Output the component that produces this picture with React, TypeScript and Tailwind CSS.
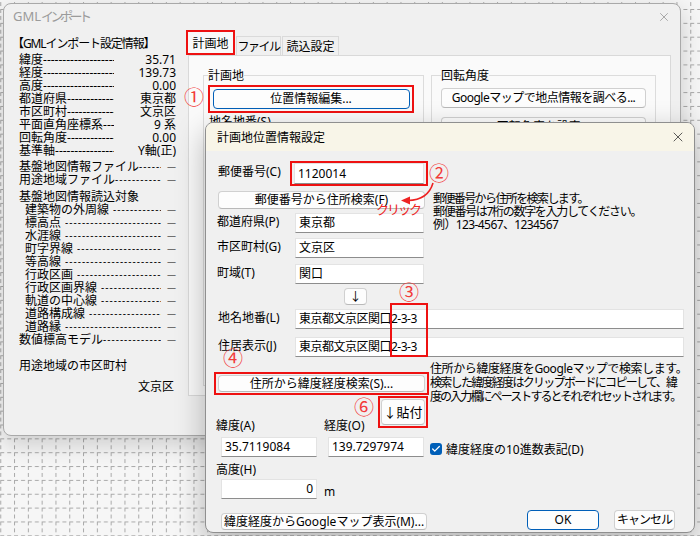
import { X, Check } from "lucide-react";
import type { ReactNode } from "react";

const DASH = "-".repeat(90);

const info: [string, string][] = [
  ["緯度", "35.71"],
  ["経度", "139.73"],
  ["高度", "0.00"],
  ["都道府県", "東京都"],
  ["市区町村", "文京区"],
  ["平面直角座標系", "9 系"],
  ["回転角度", "0.00"],
  ["基準軸", "Y軸(正)"],
];

const layers = [
  "建築物の外周線",
  "標高点",
  "水涯線",
  "町字界線",
  "等高線",
  "行政区画",
  "行政区画界線",
  "軌道の中心線",
  "道路構成線",
  "道路縁",
];

function Button({
  children,
  className = "",
  primary = false,
}: {
  children: ReactNode;
  className?: string;
  primary?: boolean;
}) {
  return (
    <div
      className={`flex items-center justify-center whitespace-nowrap rounded-[4px] border bg-[#fdfdfd] text-[12px] leading-none ${
        primary ? "border-[#005fb8]" : "border-[#d0d0d0] border-b-[#b9b9b9]"
      } ${className}`}
    >
      {children}
    </div>
  );
}

function Field({
  children,
  className = "",
  right = false,
}: {
  children?: ReactNode;
  className?: string;
  right?: boolean;
}) {
  return (
    <div
      className={`flex items-center whitespace-nowrap border border-[#e3e3e3] border-b-[#8d8d8d] bg-white px-[3px] text-[12px] leading-none ${
        right ? "justify-end" : ""
      } ${className}`}
    >
      {children}
    </div>
  );
}

function Mark({ n, className }: { n: string; className: string }) {
  return (
    <span
      className={`absolute flex h-[20px] w-[20px] items-center justify-center text-[20px] leading-none text-[#f23a3a] ${className}`}
    >
      {n}
    </span>
  );
}

function LabeledField({ label, value, className = "" }: { label: string; value: string; className?: string }) {
  return (
    <div className={`flex items-center ${className}`}>
      <span className="-ml-[1px] mb-[3px] w-[78px]">{label}</span>
      <Field className="h-[20px] w-[129px]">{value}</Field>
    </div>
  );
}

function InfoRow({ label, value }: { label: string; value: string }) {
  return (
    <div className="flex h-[13px] w-[172px] items-center pl-[15px]">
      <span className="whitespace-nowrap">{label}</span>
      <span className="flex-1 overflow-hidden whitespace-nowrap">{DASH}</span>
      <span className="w-[62px] whitespace-nowrap text-right">{value}</span>
    </div>
  );
}

function FileRow({ label, indent = false, className = "" }: { label: string; indent?: boolean; className?: string }) {
  return (
    <div className={`flex h-[13px] w-[172px] items-center ${indent ? "pl-[21px]" : "pl-[15px]"} ${className}`}>
      <span className="whitespace-nowrap">{label}</span>
      <span
        className={`flex-1 overflow-hidden whitespace-nowrap text-[10px] tracking-[1px] ${indent ? "ml-[4px]" : ""}`}
      >
        {DASH}
      </span>
      <span className="w-[15px] text-right text-[9px]">—</span>
    </div>
  );
}

function MainWindow() {
  return (
    <div className="absolute left-[3px] top-[3px] flex h-[433px] w-[678px] flex-col overflow-hidden rounded-[8px] border border-[#a9a9a9] bg-[#f0f0f0] shadow-[0_8px_24px_rgba(0,0,0,0.18)]">
      <div className="flex h-[26px] items-center justify-between pl-[9px] pr-[9px]">
        <span className="whitespace-nowrap text-[13px] text-[#9b9b9b]">
          GML<span className="tracking-[-3.5px]">インポート</span>
        </span>
        <X className="h-[14px] w-[14px] text-[#8a8a8a]" strokeWidth={1.2} />
      </div>
      <div className="flex flex-1">
        {/* 設定情報 */}
        <div className="w-[182px] pt-[7px] text-[12px] leading-[13px]">
          <div className="h-[13px] whitespace-nowrap pl-[8px] tracking-[-1.1px]">【GMLインポート設定情報】</div>
          <div className="mt-[3px]">
            {info.map(([l, v]) => (
              <InfoRow key={l} label={l} value={v} />
            ))}
          </div>
          <FileRow label="基盤地図情報ファイル" className="mt-[3px]" />
          <FileRow label="用途地域ファイル" />
          <div className="mt-[4px] h-[13px] pl-[15px]">基盤地図情報読込対象</div>
          {layers.map((l) => (
            <FileRow key={l} label={l} indent />
          ))}
          <FileRow label="数値標高モデル" />
          <div className="mt-[13px] h-[13px] pl-[15px]">用途地域の市区町村</div>
          <div className="mt-[8px] h-[13px] w-[172px] pr-[2px] text-right">文京区</div>
        </div>

        {/* タブ */}
        <div className="text-[12px] leading-[13px]">
          <div className="flex h-[25px] items-end">
            <div className="flex h-[25px] w-[49px] items-center justify-center border-2 border-[#ee1111] bg-[#f9f9f9] pt-[2px]">
              計画地
            </div>
            <div className="ml-[1px] flex h-[19px] w-[45px] items-center justify-center whitespace-nowrap border border-b-0 border-[#dadada] bg-[#f0f0f0] tracking-[-1.5px]">
              ファイル
            </div>
            <div className="ml-[1px] flex h-[19px] w-[57px] items-center justify-center whitespace-nowrap border border-b-0 border-[#dadada] bg-[#f0f0f0]">
              読込設定
            </div>
          </div>
          <div className="ml-[2px] flex h-[341px] w-[483px] gap-[7px] border border-[#d9d9d9] bg-[#fafafa] px-[14px] pt-[13px]">
            <fieldset className="h-[317px] w-[224px] border border-[#dcdcdc] px-[4px]">
              <legend>計画地</legend>
              <div className="relative mt-[3px] w-[206px] border-2 border-[#ee1111] px-[2.5px] py-[2px]">
                <Button primary className="h-[20px] w-[197px]">
                  位置情報編集...
                </Button>
                <Mark n="①" className="left-[-26px] top-[1px]" />
              </div>
              <div className="mt-[2px] pl-[1px]">地名地番(S)</div>
            </fieldset>
            <fieldset className="h-[317px] w-[225px] border border-[#dcdcdc] px-[9px]">
              <legend>回転角度</legend>
              <Button className="mt-[6px] h-[20px] w-[205px] tracking-[-0.5px]">Googleマップで地点情報を調べる...</Button>
              <Button className="mt-[9px] h-[20px] w-[205px]">回転角度を設定...</Button>
            </fieldset>
          </div>
        </div>
      </div>
    </div>
  );
}

function Dialog() {
  return (
    <div className="absolute left-[205px] top-[122px] flex h-[411px] w-[490px] flex-col overflow-hidden rounded-[8px] border border-[#8f8f8f] bg-[#f0f0f0] text-[12px] leading-[13px] shadow-[0_10px_30px_rgba(0,0,0,0.28)]">
      <div className="flex h-[28px] shrink-0 items-center justify-between bg-[#f8f5e8] pl-[11px] pr-[8px]">
        <span>計画地位置情報設定</span>
        <X className="h-[16px] w-[16px] text-[#333]" strokeWidth={1.2} />
      </div>

      <div className="pl-[12px]">
        {/* 郵便番号 */}
        <div className="mt-[10px] flex items-center">
          <span className="mb-[4px] w-[72px]">郵便番号(C)</span>
          <div className="border-2 border-[#ee1111] px-[2px]">
            <Field className="h-[21px] w-[130px]">1120014</Field>
          </div>
        </div>

        <div className="mt-[5px] flex">
          <div className="w-[212px]">
            <Button className="h-[18px] w-[207px]">郵便番号から住所検索(F)</Button>
            <LabeledField label="都道府県(P)" value="東京都" className="mt-[4px]" />
            <LabeledField label="市区町村(G)" value="文京区" className="mt-[5px]" />
            <LabeledField label="町域(T)" value="関口" className="mt-[6px]" />
            <Button className="ml-[126px] mt-[4px] h-[17px] w-[23px]">↓</Button>
          </div>
          <div className="ml-[3px] mt-[1px] whitespace-nowrap">
            <div className="tracking-[-1.6px]">郵便番号から住所を検索します。</div>
            <div className="tracking-[-1.3px]">郵便番号は7桁の数字を入力してください。</div>
            <div className="tracking-[-0.6px]">例）123-4567、1234567</div>
          </div>
        </div>

        <div className="mt-[4px] flex items-center">
          <span className="mb-[3px] w-[77px]">地名地番(L)</span>
          <Field className="h-[20px] w-[389px] tracking-[-0.5px]">東京都文京区関口2-3-3</Field>
        </div>
        <div className="mt-[8px] flex items-center">
          <span className="mb-[3px] w-[77px]">住居表示(J)</span>
          <Field className="h-[20px] w-[389px] tracking-[-0.5px]">東京都文京区関口2-3-3</Field>
        </div>

        {/* 緯度経度検索 */}
        <div className="mt-[5px] flex">
          <div className="w-[212px] pt-[10px]">
            <div className="-ml-[4px] w-[215px] border-2 border-[#ee1111] px-[2px] py-[1px]">
              <Button className="h-[17px] w-[207px]">住所から緯度経度検索(S)...</Button>
            </div>
            <div className="mt-[1px] flex h-[36px]">
              <span className="-ml-[2px] w-[108px] self-end">緯度(A)</span>
              <span className="self-end">経度(O)</span>
              <div className="ml-auto mr-[2px] self-start border-2 border-[#ee1111] p-[1px]">
                <Button className="h-[26px] w-[44px] text-[13px]">↓貼付</Button>
              </div>
            </div>
          </div>
          <div className="whitespace-nowrap leading-[14px]">
            <div className="tracking-[-0.4px]">住所から緯度経度をGoogleマップで検索します。</div>
            <div className="tracking-[-1.7px]">検索した緯度経度はクリップボードにコピーして、緯</div>
            <div className="tracking-[-1.9px]">度の入力欄にペーストするとそれぞれセットされます。</div>
          </div>
        </div>

        <div className="mt-[5px] flex items-center">
          <Field className="ml-[3px] h-[20px] w-[96px]">35.7119084</Field>
          <Field className="ml-[11px] h-[20px] w-[96px]">139.7297974</Field>
          <div className="ml-[6px] mt-[4px] flex h-[12px] w-[12px] items-center justify-center rounded-[3px] bg-[#005fb8]">
            <Check className="h-[10px] w-[10px] text-white" strokeWidth={3} />
          </div>
          <span className="ml-[4px] mt-[4px]">緯度経度の10進数表記(D)</span>
        </div>

        <div className="-ml-[2px] mt-[6px]">高度(H)</div>
        <div className="mt-[3px] flex items-center">
          <Field right className="ml-[3px] h-[20px] w-[96px]">
            0
          </Field>
          <span className="ml-[7px] mt-[4px]">m</span>
        </div>

        <div className="mt-[11px] flex items-start">
          <Button className="ml-[3px] mt-[3px] h-[17px] w-[206px]">緯度経度からGoogleマップ表示(M)...</Button>
          <Button primary className="ml-[100px] h-[20px] w-[72px]">
            OK
          </Button>
          <Button className="ml-[15px] h-[20px] w-[61px] tracking-[-1px]">キャンセル</Button>
        </div>
      </div>

      {/* 注釈 */}
      <div className="absolute left-[184px] top-[180px] h-[54px] w-[38px] border-2 border-[#ee1111]" />
      <svg className="pointer-events-none absolute left-0 top-0" width="490" height="411">
        <path d="M227 60 Q222 77 202 77.5" fill="none" stroke="#ee2222" strokeWidth="1.6" />
        <polygon points="195,77.5 204,73.5 204,81.5" fill="#ee2222" />
      </svg>
      <span className="absolute left-[170px] top-[79px] whitespace-nowrap text-[13px] leading-[14px] tracking-[-2px] text-[#ee2222]">
        クリック
      </span>
      <Mark n="②" className="left-[223px] top-[41px]" />
      <Mark n="③" className="left-[193px] top-[160px]" />
      <Mark n="④" className="left-[17px] top-[226px]" />
      <Mark n="⑥" className="left-[148px] top-[275px]" />
    </div>
  );
}

export default function App() {
  return (
    <div className="relative h-[536px] w-[700px] overflow-hidden bg-[#f6f6f6] font-['Noto_Sans','Noto_Sans_CJK_JP',sans-serif] text-black">
      <svg className="absolute inset-0" width="700" height="536">
        <defs>
          <pattern id="grid" width="13.8" height="13.85" patternUnits="userSpaceOnUse" x="0.25" y="9">
            <line x1="0.5" y1="0" x2="0.5" y2="13.85" stroke="#a9a9a9" strokeDasharray="4 3" />
            <line x1="0" y1="0.5" x2="13.8" y2="0.5" stroke="#a9a9a9" strokeDasharray="4 3" />
          </pattern>
        </defs>
        <rect width="700" height="536" fill="url(#grid)" />
      </svg>
      <MainWindow />
      <Dialog />
    </div>
  );
}
